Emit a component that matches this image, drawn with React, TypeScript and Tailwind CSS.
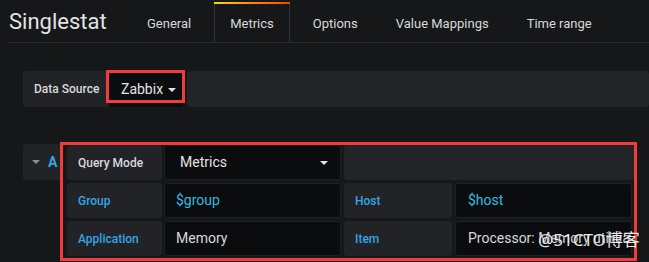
import { ReactNode } from "react";

const tabs = ["General", "Metrics", "Options", "Value Mappings", "Time range"];

function Caret({ className = "" }: { className?: string }) {
  return (
    <svg width="8" height="4" viewBox="0 0 8 4" className={className}>
      <path d="M0 0h8L4 4z" fill="currentColor" />
    </svg>
  );
}

function Label({ children, w, blue }: { children: ReactNode; w: string; blue?: boolean }) {
  return (
    <div
      className={`${w} shrink-0 h-full flex items-center pl-[11px] rounded-[3px] bg-[#222327] text-[12px] font-medium ${
        blue ? "text-[#33a5e6]" : "text-[#d8d9da]"
      }`}
    >
      {children}
    </div>
  );
}

function Field({ children, pl = "pl-[11px]", cls = "text-[#d8d9da]" }: { children: ReactNode; pl?: string; cls?: string }) {
  return (
    <div
      className={`w-[177px] shrink-0 h-full flex items-center ${pl} rounded-[3px] bg-[#0b0c0e] border border-[#1f2023] text-[14px] whitespace-nowrap overflow-hidden ${cls}`}
    >
      {children}
    </div>
  );
}

export default function App() {
  return (
    <div className="relative w-[649px] h-[262px] overflow-hidden bg-[#161719] font-['Roboto','Noto_Sans',sans-serif]">
      {/* header + tabs */}
      <div className="ml-[9px] h-[43px] flex items-end border-b border-[#2b2c2f]">
        <div className="w-[123px] shrink-0 self-center pt-[1px] text-[22px] leading-none text-[#e3e3e3]">Singlestat</div>
        <div className="flex gap-2">
          {tabs.map((t) =>
            t === "Metrics" ? (
              <div
                key={t}
                className="relative -mb-px h-[40px] px-[15px] pt-[3px] flex items-center bg-[#161719] border-x border-[#2f3033] text-[13px] text-[#d8d9da]"
              >
                <div className="absolute -left-px -right-px top-0 h-[2px] bg-gradient-to-r from-[#ffd500] via-[#ff8a00] to-[#ff3d00]" />
                {t}
              </div>
            ) : (
              <div key={t} className="h-[40px] px-[15px] pt-[3px] flex items-center text-[13px] text-[#d8d9da]">
                {t}
              </div>
            )
          )}
        </div>
      </div>

      {/* data source row */}
      <div className="mt-[28px] ml-[23px] h-[36px] flex">
        <div className="w-[86px] shrink-0 h-full flex items-center pl-[11px] rounded-l-[3px] bg-[#212327] text-[12px] font-medium text-[#d8d9da]">
          Data Source
        </div>
        <div className="w-[74px] shrink-0 h-full flex items-center gap-[5px] pl-[12px] bg-[#0b0c0e] text-[14px] text-[#e3e3e3]">
          Zabbix
          <Caret className="text-[#e3e3e3] mt-[2px]" />
        </div>
        <div className="ml-[4px] flex-1 h-full rounded-[3px] bg-[#222428]" />
      </div>

      {/* query section */}
      <div className="mt-[38px] ml-[23px] flex gap-[5px] items-start">
        <div className="w-[39px] shrink-0 h-[36px] -mt-[1px] flex items-center gap-[8px] pl-[9px] rounded-[3px] bg-[#212327]">
          <Caret className="text-[#8e8e8e]" />
          <span className="text-[14px] font-bold text-[#33a5e6]">A</span>
        </div>
        <div className="flex flex-col gap-[3px]">
          <div className="h-[35px] flex">
            <Label w="w-[95px]">Query Mode</Label>
            <div className="ml-[2px] w-[177px] shrink-0 h-full flex items-center justify-between pl-[15px] pr-[12px] rounded-[3px] bg-[#0b0c0e] border border-[#1f2023] text-[14px] text-[#e3e3e3]">
              Metrics
              <Caret className="text-[#e3e3e3]" />
            </div>
            <div className="ml-[3px] w-[290px] shrink-0 h-full rounded-[3px] bg-[#222428]" />
          </div>
          <div className="h-[35px] flex gap-[3px]">
            <Label w="w-[95px] mr-[-1px]" blue>Group</Label>
            <Field cls="text-[#2fbde0]">$group</Field>
            <Label w="w-[108px]" blue>Host</Label>
            <Field pl="pl-[12px]" cls="text-[#2fbde0]">$host</Field>
          </div>
          <div className="h-[35px] flex gap-[3px]">
            <Label w="w-[95px] mr-[-1px]" blue>Application</Label>
            <Field>Memory</Field>
            <Label w="w-[108px]" blue>Item</Label>
            <Field pl="pl-[12px]">Processor: Memory utilization</Field>
          </div>
        </div>
      </div>

      {/* annotation boxes */}
      <div className="absolute left-[106px] top-[70px] w-[79px] h-[33px] border-[3px] border-[#f23b3b]" />
      <div className="absolute left-[60px] top-[142px] w-[577px] h-[119px] border-[3px] border-[#f23b3b]" />

      {/* watermark */}
      <div className="absolute left-[538px] top-[231px] text-[17px] leading-none text-white/90 font-['Noto_Sans','Noto_Sans_CJK_SC',sans-serif] [text-shadow:0_0_2px_rgba(0,0,0,0.6)]">
        @51CTO博客
      </div>
    </div>
  );
}
